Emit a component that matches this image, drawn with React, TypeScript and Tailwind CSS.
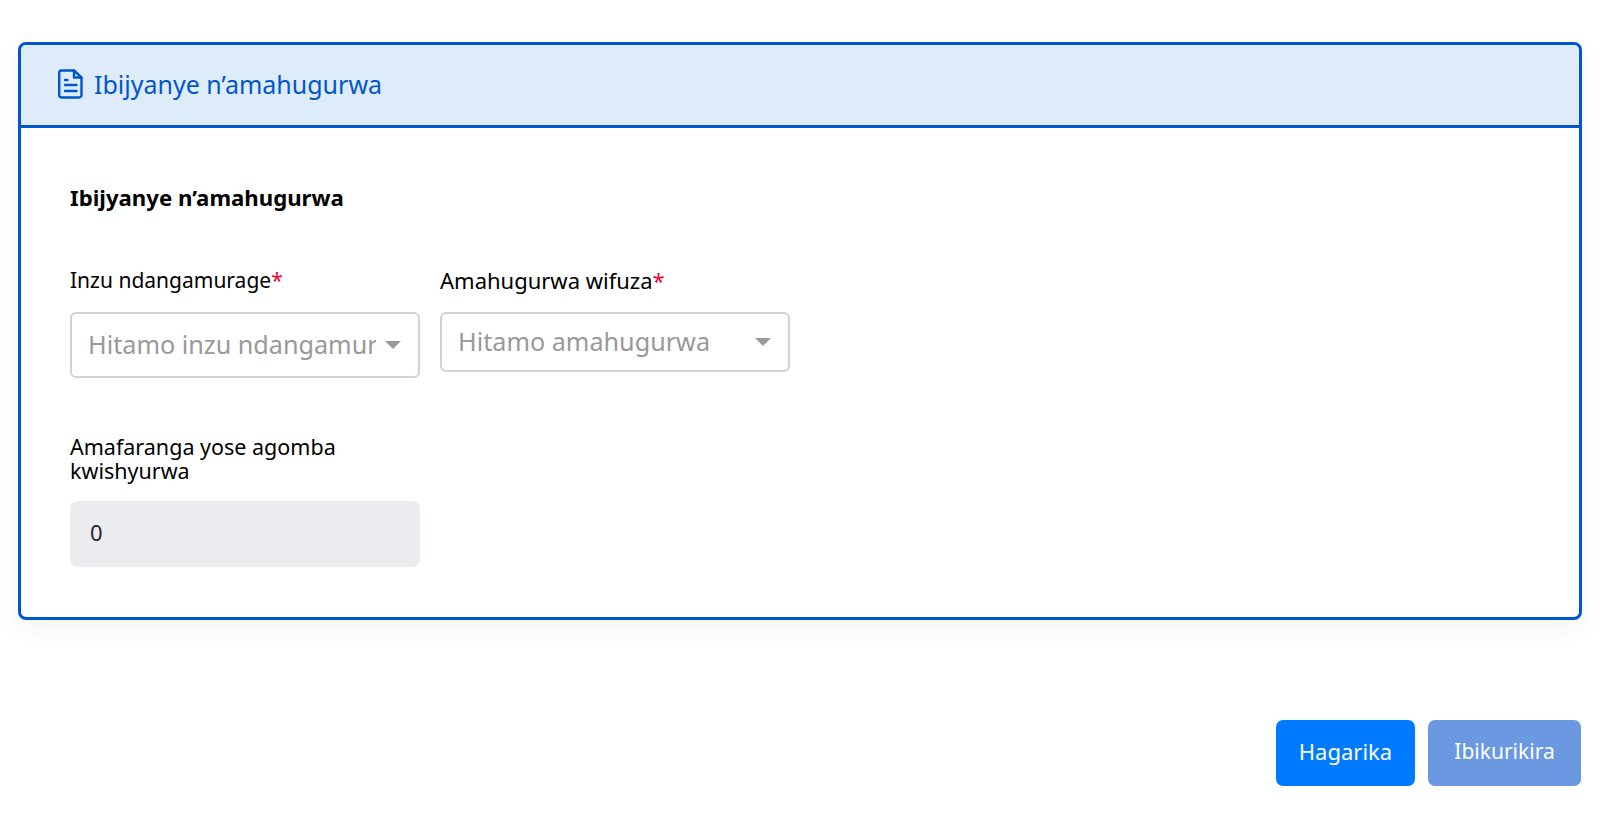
const font = { fontFamily: '"Noto Sans", "Lato", sans-serif' };

function Caret() {
  return <span className="block h-0 w-0 shrink-0 border-x-[8px] border-t-[8px] border-x-transparent border-t-[#999999]" />;
}

function Field({ label, placeholder, tall, size }: { label: string; placeholder: string; tall?: boolean; size: string }) {
  return (
    <div className="flex w-[350px] flex-col">
      <label className={`mb-[19px] h-[24px] leading-[23px] text-black ${size}`}>
        {label}
        <span className="text-[#f5002d]">*</span>
      </label>
      <div className={`flex items-center rounded-[6px] border-2 border-[#d2d2d2] bg-white pl-[16px] pr-[17px] ${tall ? "h-[66px]" : "h-[60px]"}`}>
        <span className="min-w-0 flex-1 overflow-hidden whitespace-nowrap text-[25.2px] text-[#999999]">{placeholder}</span>
        <span className="ml-[9px] flex items-center"><Caret /></span>
      </div>
    </div>
  );
}

export default function App() {
  return (
    <div style={font} className="flex h-[818px] flex-col overflow-hidden bg-white">
      <div className="h-0 shadow-[0_0_16px_rgba(0,0,0,0.1)]" />
      <div className="mx-[18px] mt-[42px] h-[578px] overflow-hidden rounded-[8px] border-[3px] border-[#0256cd] shadow-[0_8px_24px_rgba(0,0,0,0.05)]">
        <div className="flex h-[83px] items-center gap-[11px] border-b-[3px] border-[#0256cd] bg-[#deecf9] pl-[37px] text-[#0256cd]">
          <svg className="-mt-[3px]" width="25" height="30" viewBox="0 0 25 30" fill="none" stroke="currentColor" strokeWidth="2.4" strokeLinejoin="round" strokeLinecap="round">
            <path d="M3.5 1.5H16L23.5 8.5V26a2.5 2.5 0 0 1-2.5 2.5H3.5A2.5 2.5 0 0 1 1.2 26V4a2.5 2.5 0 0 1 2.3-2.5Z" />
            <path d="M16 1.5V8.5H23.5" />
            <path d="M7 11H9.5M7 16H18.5M7 22H18.5" />
          </svg>
          <span className="-mt-[2px] text-[25px] leading-none">Ibijyanye n’amahugurwa</span>
        </div>
        <div className="flex flex-col pl-[49px] pt-[54px]">
          <h2 className="h-[32px] text-[22.2px] font-bold leading-[32px] text-black">Ibijyanye n’amahugurwa</h2>
          <div className="mt-[55px] flex items-start gap-[20px]">
            <Field label="Inzu ndangamurage" placeholder="Hitamo inzu ndangamurage" tall size="text-[21px]" />
            <Field label="Amahugurwa wifuza" placeholder="Hitamo amahugurwa" size="text-[22px]" />
          </div>
          <div className="mt-[57px] flex w-[350px] flex-col">
            <label className="text-[21.5px] leading-[24px] text-black">Amafaranga yose agomba kwishyurwa</label>
            <div className="mt-[18px] flex h-[66px] items-center rounded-[8px] bg-[#eaecef] pb-[3px] pl-[20px] text-[22px] text-[#212529]">0</div>
          </div>
        </div>
      </div>
      <div className="mr-[19px] mt-[100px] flex justify-end gap-[13px]">
        <button className="h-[66px] w-[139px] rounded-[7px] bg-[#007bff] pb-[3px] text-[22px] text-white">Hagarika</button>
        <button className="h-[66px] w-[153px] rounded-[7px] bg-[#6a98e1] pb-[3px] text-[21px] text-white">Ibikurikira</button>
      </div>
    </div>
  );
}
